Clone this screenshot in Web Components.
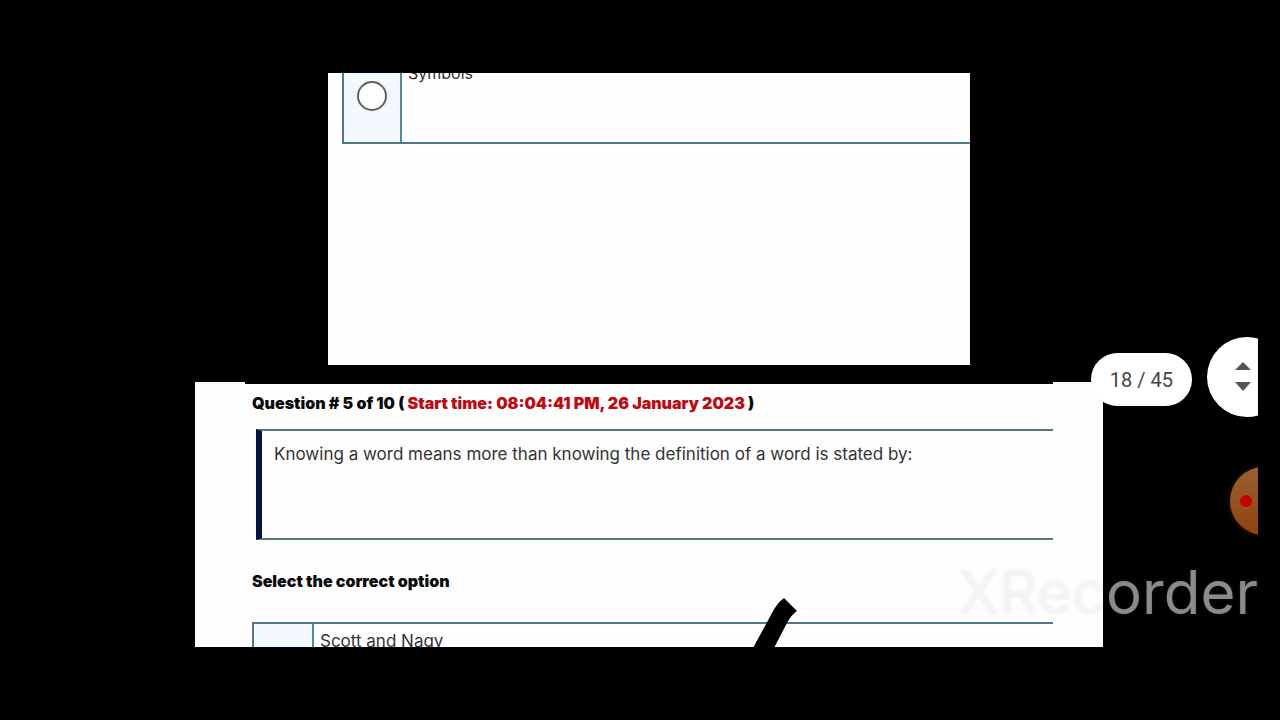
<!DOCTYPE html>
<html lang="en">
<head>
<meta charset="utf-8">
<meta name="viewport" content="width=device-width, initial-scale=1">
<title>Quiz pages</title>
<style>
html, body {
	margin: 0;
	height: 100%;
	background: #000;
}
body {
	font-family: Inter, "Open Sans", sans-serif;
	font-size: 17px;
	line-height: 24px;
	color: #333;
}
</style>
</head>
<body>
<page-viewer>
	<doc-page size="small">
		<answer-option name="q4" size="tall">Symbols</answer-option>
	</doc-page>
	<doc-page size="large">
		<quiz-question number="5" total="10" start="08:04:41 PM, 26 January 2023">
			Knowing a word means more than knowing the definition of a word is stated by:
			<answer-option slot="options" name="q5">Scott and Nagy</answer-option>
		</quiz-question>
		<pen-stroke></pen-stroke>
	</doc-page>
	<page-badge slot="overlay" page="18" total="45"></page-badge>
	<scroll-handle slot="overlay"></scroll-handle>
	<record-bubble slot="overlay"></record-bubble>
	<brand-mark slot="overlay">XRecorder</brand-mark>
</page-viewer>

<script>
class BaseElement extends HTMLElement {
	constructor() {
		super();
		this._root = this.attachShadow({ mode: 'open' });
	}
	connectedCallback() {
		this._root.innerHTML = this.render();
	}
}

class PageViewer extends BaseElement {
	render() {
		return `
<style>
:host {
	display: flex;
	box-sizing: border-box;
	height: 100vh;
	padding: 73px 22px 73px 40px;
}
.screen {
	position: relative;
	flex: 1;
	min-width: 0;
	overflow: hidden;
}
.pages {
	display: flex;
	flex-direction: column;
	align-items: center;
	gap: 17px;
}
</style>
<main class="screen">
	<div class="pages"><slot></slot></div>
	<slot name="overlay"></slot>
</main>`;
	}
}

class DocPage extends BaseElement {
	render() {
		return `
<style>
:host {
	display: block;
	position: relative;
	box-sizing: border-box;
	width: 100%;
	background: #fefefe;
}
:host([size="small"]) {
	max-width: 642px;
	padding: 0 0 221px 14px;
	overflow: hidden;
}
:host([size="large"]) {
	max-width: 908px;
	padding: 0 50px 60px;
}
/* the top of this page is scrolled out of view */
:host([size="small"]) .content {
	margin-top: -25px;
}
</style>
<div class="content"><slot></slot></div>`;
	}
}

class QuizQuestion extends BaseElement {
	render() {
		const number = this.getAttribute('number');
		const total = this.getAttribute('total');
		const start = this.getAttribute('start');
		return `
<style>
:host {
	display: block;
	border-top: 2px solid #000;
	padding: 7px 0 0 7px;
}
h2 {
	margin: 0;
	font-size: 16px;
	line-height: 24px;
	font-weight: 900;
	color: #0a0a0a;
}
h2 span {
	color: #c00811;
}
.text {
	box-sizing: border-box;
	min-height: 111px;
	margin: 14px 0 29px 4px;
	padding: 11px 12px;
	border: solid #587880;
	border-width: 2px 0;
	border-left: 6px solid #051440;
}
.options {
	margin-top: 29px;
}
</style>
<h2>Question # ${number} of ${total} ( <span>Start time: ${start}</span> )</h2>
<div class="text"><slot></slot></div>
<h2>Select the correct option</h2>
<div class="options"><slot name="options"></slot></div>`;
	}
}

class AnswerOption extends BaseElement {
	render() {
		return `
<style>
:host {
	display: block;
}
label {
	display: grid;
	grid-template-columns: 60px 1fr;
	box-sizing: border-box;
	min-height: 96px;
	border: 2px solid #4d7c88;
	border-right: 0;
}
.pick {
	display: flex;
	align-items: center;
	justify-content: center;
	border-right: 2px solid #4d8c98;
	background: #f3f9fe;
}
input {
	appearance: none;
	box-sizing: border-box;
	width: 30px;
	height: 30px;
	margin: 0;
	border: 2px solid #606063;
	border-radius: 50%;
	background: #fff;
}
input:checked {
	background: radial-gradient(#333 40%, #fff 45%);
}
.text {
	padding: 5px 6px;
}
:host([size="tall"]) {
	font-size: 16px;
}
:host([size="tall"]) label {
	grid-template-columns: 58px 1fr;
}
:host([size="tall"]) .text {
	padding-top: 11px;
}
</style>
<label>
	<span class="pick"><input type="radio" name="${this.getAttribute('name')}"></span>
	<span class="text"><slot></slot></span>
</label>`;
	}
}

class PenStroke extends BaseElement {
	render() {
		return `
<style>
:host {
	position: absolute;
	top: 216px;
	left: 558px;
}
svg {
	display: block;
}
</style>
<svg width="46" height="50" viewBox="0 0 46 50" aria-hidden="true">
	<path d="M0 50 L19 15 Q24 5 31 0 L44 13 Q38 17 34 25 L21 50 Z" fill="#000"/>
</svg>`;
	}
}

class PageBadge extends BaseElement {
	render() {
		return `
<style>
:host {
	position: absolute;
	top: 280px;
	right: 66px;
	padding: 15px 19px 14px;
	border-radius: 27px;
	background: #fff;
	color: #444;
	font: 20px/24px Roboto, sans-serif;
}
</style>
${this.getAttribute('page')} / ${this.getAttribute('total')}`;
	}
}

class ScrollHandle extends BaseElement {
	render() {
		return `
<style>
:host {
	position: absolute;
	top: 264px;
	right: -29px;
}
button {
	display: flex;
	align-items: center;
	width: 80px;
	height: 80px;
	padding: 0 0 0 28px;
	border: 0;
	border-radius: 50%;
	background: #fff;
	cursor: pointer;
}
</style>
<button type="button" aria-label="Scroll pages">
	<svg width="16" height="30" viewBox="0 0 16 30" fill="#555">
		<path d="M0 8 L8 0 L16 8 Z M0 20 L16 20 L8 29 Z"/>
	</svg>
</button>`;
	}
}

class RecordBubble extends BaseElement {
	render() {
		return `
<style>
:host {
	position: absolute;
	top: 394px;
	right: -40px;
}
button {
	display: flex;
	align-items: center;
	width: 68px;
	height: 68px;
	padding: 0 0 0 10px;
	border: 0;
	border-radius: 50%;
	background: linear-gradient(#996033, #8f430c);
	box-shadow: 0 0 4px #4a2205;
	cursor: pointer;
}
i {
	width: 12px;
	height: 12px;
	border-radius: 50%;
	background: #c90000;
}
</style>
<button type="button" aria-label="Stop recording"><i></i></button>`;
	}
}

class BrandMark extends BaseElement {
	render() {
		return `
<style>
:host {
	position: absolute;
	top: 483px;
	right: 0;
	color: rgba(255, 255, 255, 0.5);
	font-size: 60px;
	line-height: 72px;
	text-shadow: 0 0 3px rgba(128, 128, 128, 0.2);
	pointer-events: none;
}
</style>
<slot></slot>`;
	}
}

window.customElements.define('page-viewer', PageViewer);
window.customElements.define('doc-page', DocPage);
window.customElements.define('quiz-question', QuizQuestion);
window.customElements.define('answer-option', AnswerOption);
window.customElements.define('pen-stroke', PenStroke);
window.customElements.define('page-badge', PageBadge);
window.customElements.define('scroll-handle', ScrollHandle);
window.customElements.define('record-bubble', RecordBubble);
window.customElements.define('brand-mark', BrandMark);
</script>
</body>
</html>
